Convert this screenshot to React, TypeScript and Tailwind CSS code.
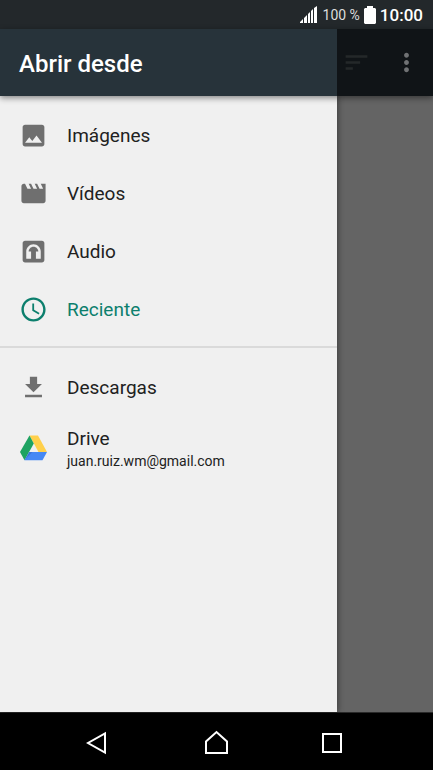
import type { ReactNode } from 'react';

const icons = {
  image: 'M21 19V5c0-1.1-.9-2-2-2H5c-1.1 0-2 .9-2 2v14c0 1.1.9 2 2 2h14c1.1 0 2-.9 2-2zM8.5 13.5l2.5 3.01L14.5 12l4.5 6H5l3.5-4.5z',
  video: 'M18 4l2 4h-3l-2-4h-2l2 4h-3l-2-4H8l2 4H7L5 4H4c-1.1 0-1.99.9-1.99 2L2 18c0 1.1.9 2 2 2h16c1.1 0 2-.9 2-2V4h-4z',
  audio: 'M19 3H5c-1.1 0-2 .9-2 2v14c0 1.1.9 2 2 2h14c1.1 0 2-.9 2-2V5c0-1.1-.9-2-2-2zM18 18h-4v-6h2c0-2.21-1.79-4-4-4s-4 1.79-4 4h2v6H6v-6c0-3.31 2.69-6 6-6s6 2.69 6 6v6z',
  clock: 'M11.99 2C6.47 2 2 6.48 2 12s4.47 10 9.99 10C17.52 22 22 17.52 22 12S17.52 2 11.99 2zM12 20c-4.42 0-8-3.58-8-8s3.58-8 8-8 8 3.58 8 8-3.58 8-8 8zm.5-13H11v6l5.25 3.15.75-1.23-4.5-2.67z',
  download: 'M19 9h-4V3H9v6H5l7 7 7-7zM5 18v2h14v-2H5z',
  sort: 'M3 18h6v-2H3v2zM3 6v2h18V6H3zm0 7h12v-2H3v2z',
  more: 'M12 8c1.1 0 2-.9 2-2s-.9-2-2-2-2 .9-2 2 .9 2 2 2zm0 2c-1.1 0-2 .9-2 2s.9 2 2 2 2-.9 2-2-.9-2-2-2zm0 6c-1.1 0-2 .9-2 2s.9 2 2 2 2-.9 2-2-.9-2-2-2z',
};

const Icon = ({ d }: { d: string }) => (
  <svg viewBox="0 0 24 24" className="size-[29px] shrink-0 fill-current" aria-hidden="true">
    <path d={d} fillRule="evenodd" />
  </svg>
);

const DriveLogo = () => (
  <svg viewBox="0 0 29 29" className="size-[29px] shrink-0" aria-hidden="true">
    <path d="M10.5 1.5H19L28 18h-8.5z" fill="#ffd04b" />
    <path d="M10.5 1.5l4.300 8.100L5.500 26.200 1 18z" fill="#1ea362" />
    <path d="M10.200 18H28l-4.500 8.200h-18z" fill="#4688f4" />
    <path d="M10.200 18h3.200l-7.900 8.200z" fill="#3469c8" opacity="0.6" />
  </svg>
);

type RowProps = {
  icon: ReactNode;
  label: string;
  detail?: string;
  active?: boolean;
};

const Row = ({ icon, label, detail, active }: RowProps) => (
  <li>
    <button
      type="button"
      className={`flex w-full items-center gap-[19px] pl-[19px] text-left ${detail ? 'h-16' : 'h-[58px]'} ${
        active ? 'text-[#0c7f6d]' : 'text-[#6f6f6f]'
      }`}
    >
      {icon}
      <span className={`flex flex-col pt-0.5 ${active ? '' : 'text-[#212121]'}`}>
        <span className="text-[19px] leading-6">{label}</span>
        {detail && <span className="text-sm leading-5">{detail}</span>}
      </span>
    </button>
  </li>
);

const StatusBar = () => (
  <div className="flex h-[29px] items-center justify-end bg-[#23282b] pr-[10px] text-white">
    <svg viewBox="0 0 17 17" className="mr-[6px] size-[17px] fill-current" aria-hidden="true">
      <path d="M0 17v-1l3-3v4zM4 17v-5l3-3v8zM8 17V8l2-2v11zM11 17V5l2-2v14zM14 17V2l3-2v17z" />
    </svg>
    <span className="mr-1 text-sm leading-6 text-[#dcdddd]">100 %</span>
    <svg viewBox="0 0 12 18" className="mr-1 h-[18px] w-3 fill-current" aria-hidden="true">
      <path d="M3 0h6v2h2l1 1v14l-1 1H1l-1-1V3l1-1h2z" />
    </svg>
    <span className="text-[17px] leading-6 font-medium">10:00</span>
  </div>
);

const NavBar = () => (
  <nav className="flex h-[58px] items-center justify-center gap-[87px] border-t border-[#2a2a2a] bg-black pt-1 text-white">
    <button type="button" aria-label="Atrás">
      <svg viewBox="0 0 29 29" className="size-[29px] fill-none stroke-current stroke-2">
        <path d="M19 4.500v19L2 14z" />
      </svg>
    </button>
    <button type="button" aria-label="Inicio">
      <svg viewBox="0 0 29 29" className="size-[29px] fill-none stroke-current stroke-2">
        <path d="M4 24V12.500L14.500 3 25 12.500V24z" />
      </svg>
    </button>
    <button type="button" aria-label="Recientes">
      <svg viewBox="0 0 29 29" className="size-[29px] fill-none stroke-current stroke-2">
        <path d="M5 5h18v18H5z" />
      </svg>
    </button>
  </nav>
);

export default function App() {
  return (
    <div className="flex min-h-screen flex-col bg-[#f0f0f0] font-[Roboto,sans-serif]">
      <StatusBar />

      <header className="relative z-10 flex h-[67px] shadow-[0_2px_6px_rgba(0,0,0,0.45)]">
        <div className="flex flex-1 items-center bg-[#27333a] pt-0.5 pl-[19px]">
          <h1 className="text-2xl font-medium text-white">Abrir desde</h1>
        </div>
        <div className="flex w-24 items-center gap-[21px] bg-[#101417] pl-[5px]">
          <button type="button" aria-label="Ordenar" className="text-[#24282a]">
            <Icon d={icons.sort} />
          </button>
          <button type="button" aria-label="Más opciones" className="text-[#707274]">
            <Icon d={icons.more} />
          </button>
        </div>
      </header>

      <main className="flex flex-1">
        <div className="relative flex-1 bg-[#f0f0f0] shadow-[1px_0_6px_rgba(0,0,0,0.4)]">
          <ul className="pt-[10px] pb-2">
            <Row icon={<Icon d={icons.image} />} label="Imágenes" />
            <Row icon={<Icon d={icons.video} />} label="Vídeos" />
            <Row icon={<Icon d={icons.audio} />} label="Audio" />
            <Row icon={<Icon d={icons.clock} />} label="Reciente" active />
          </ul>
          <ul className="border-t-2 border-[#dadada] pt-[10px]">
            <Row icon={<Icon d={icons.download} />} label="Descargas" />
            <Row icon={<DriveLogo />} label="Drive" detail="juan.ruiz.wm@gmail.com" />
          </ul>
        </div>
        {/* dimmed content behind the drawer */}
        <div className="w-24 bg-[#646464]" />
      </main>

      <NavBar />
    </div>
  );
}
